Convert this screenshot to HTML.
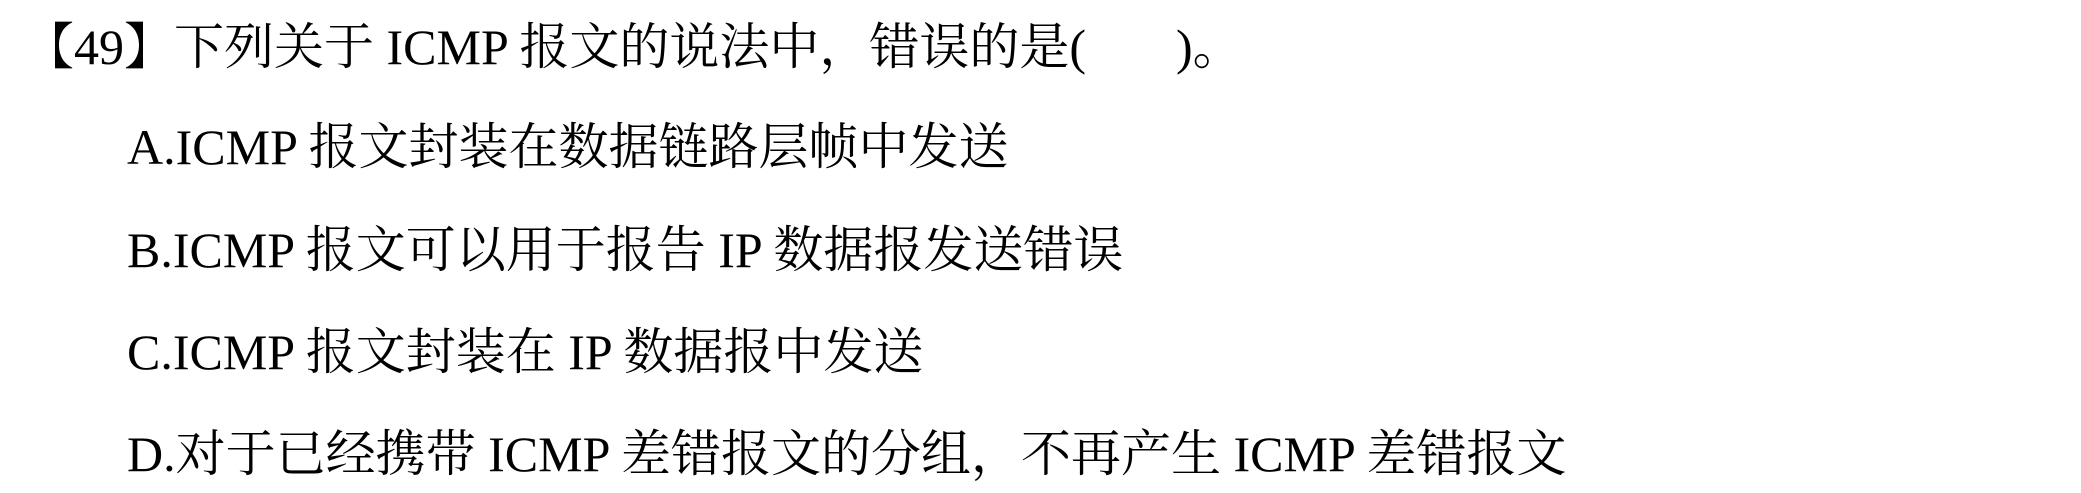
<!DOCTYPE html>
<html><head><meta charset="utf-8"><style>
html,body{margin:0;padding:0;background:#fff;}
body{width:2081px;height:493px;position:relative;overflow:hidden;font-family:"Liberation Serif","Noto Serif CJK SC",serif;font-size:50px;color:#000;}
.l{position:absolute;white-space:pre;line-height:1;}
</style></head><body>
<div class="l" style="left:24px;top:22px;">【49】下列关于 ICMP 报文的说法中，错误的是(</div>
<div class="l" style="left:1176px;top:22px;">)。</div>
<div class="l" style="left:127px;top:122px;">A.ICMP 报文封装在数据链路层帧中发送</div>
<div class="l" style="left:127px;top:225px;">B.ICMP 报文可以用于报告 IP 数据报发送错误</div>
<div class="l" style="left:127px;top:327px;">C.ICMP 报文封装在 IP 数据报中发送</div>
<div class="l" style="left:127px;top:429px;">D.对于已经携带 ICMP 差错报文的分组，不再产生 ICMP 差错报文</div>
</body></html>
